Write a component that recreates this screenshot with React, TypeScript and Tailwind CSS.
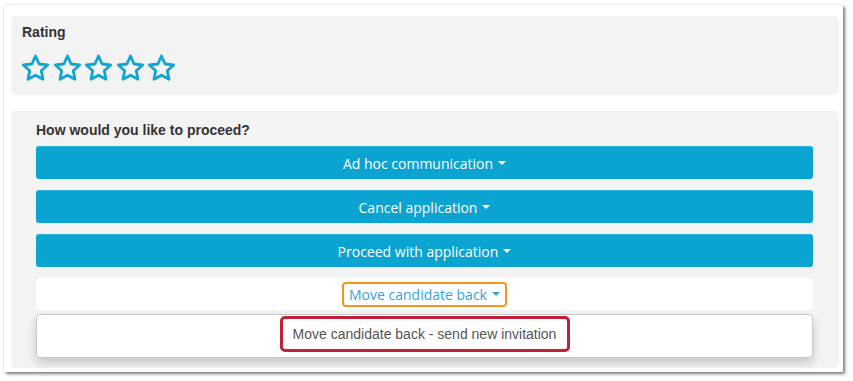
import React from "react";

function StarOutline() {
  return (
    <svg width="31" height="31" viewBox="0 0 24 24" className="block -mx-[1px]">
      <polygon
        points="12,2.4 14.8,8.5 21.4,9.3 16.5,13.8 17.8,20.4 12,17.2 6.2,20.4 7.5,13.8 2.6,9.3 9.2,8.5"
        fill="none"
        stroke="#12a5d3"
        strokeWidth="2.2"
        strokeLinejoin="round"
      />
    </svg>
  );
}

function Caret({ color }: { color: string }) {
  return (
    <span
      className="inline-block ml-[5px] align-middle w-0 h-0 border-x-[4px] border-x-transparent border-t-[4px]"
      style={{ borderTopColor: color }}
    />
  );
}

function ActionButton({ label }: { label: string }) {
  return (
    <button className="w-full h-[33px] rounded-[3px] bg-[#0ba3cf] border-t border-[#2bb3dc] text-white text-[14px] font-['Open_Sans',sans-serif] flex items-center justify-center">
      {label}
      <Caret color="#ffffff" />
    </button>
  );
}

export default function App() {
  return (
    <div className="w-[853px] h-[381px] bg-white pt-[5px] pl-[4px]">
      <div className="w-[839px] h-[367px] bg-white shadow-[2px_2px_3px_rgba(0,0,0,0.5),0_0_2px_rgba(0,0,0,0.15)] pl-[7px] pr-[4px] pt-[11px]">
        <div className="h-[79px] bg-[#f3f3f3] rounded-[5px] pl-[11px] pt-[8px]">
          <div className="text-[14px] font-bold text-[#333] font-['Liberation_Sans',Arial,sans-serif] leading-[16px]">
            Rating
          </div>
          <div className="flex gap-[2.5px] mt-[13px] ml-[-1px]">
            <StarOutline />
            <StarOutline />
            <StarOutline />
            <StarOutline />
            <StarOutline />
          </div>
        </div>

        <div className="mt-[16px] h-[257px] bg-[#f3f3f3] rounded-[5px] pl-[25px] pr-[26px] pt-[11px]">
          <div className="text-[14px] font-bold text-[#333] font-['Liberation_Sans',Arial,sans-serif] leading-[16px]">
            How would you like to proceed?
          </div>
          <div className="mt-[8px] flex flex-col gap-[11px]">
            <ActionButton label="Ad hoc communication" />
            <ActionButton label="Cancel application" />
            <ActionButton label="Proceed with application" />
          </div>
          <div className="mt-[11px] h-[32px] bg-white rounded-[4px] flex items-center justify-center">
            <span className="h-[25px] px-[5px] border-2 border-[#f7941d] rounded-[4px] flex items-center text-[14px] text-[#3b9fd6] font-['Open_Sans',sans-serif]">
              Move candidate back
              <Caret color="#3b9fd6" />
            </span>
          </div>
          <div className="mt-[4px] h-[44px] bg-white border border-[#c8c8c8] rounded-[4px] shadow-[0_5px_10px_rgba(0,0,0,0.18)] flex justify-center pt-[1px]">
            <div className="w-[290px] h-[36px] border-[3px] border-[#c1203b] rounded-[5px] flex items-center justify-center text-[14px] text-[#555] font-['Liberation_Sans',Arial,sans-serif]">
              Move candidate back - send new invitation
            </div>
          </div>
        </div>
      </div>
    </div>
  );
}
